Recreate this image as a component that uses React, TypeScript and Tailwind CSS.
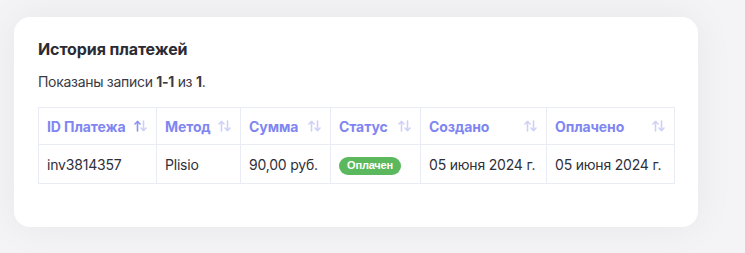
import React from "react";

const SortIcon = ({ active = false }: { active?: boolean }) => (
  <svg width="13" height="12" viewBox="0 0 13 12" className="shrink-0">
    <g fill="none" strokeWidth="1.6" strokeLinecap="round" strokeLinejoin="round">
      <g stroke={active ? "#8d92f2" : "#cdd0f7"}>
        <path d="M3.5 11V1.5" />
        <path d="M1 4L3.5 1.5L6 4" />
      </g>
      <g stroke="#cdd0f7">
        <path d="M9.5 1V10.5" />
        <path d="M7 8L9.5 10.5L12 8" />
      </g>
    </g>
  </svg>
);

const cols = [
  { label: "ID Платежа", w: 118, active: true },
  { label: "Метод", w: 84 },
  { label: "Сумма", w: 90 },
  { label: "Статус", w: 90 },
  { label: "Создано", w: 126 },
  { label: "Оплачено", w: 128 },
];

export default function App() {
  return (
    <div
      className="w-[745px] h-[253px] bg-[#f4f4f6] pt-[17px] pl-[14px] overflow-hidden"
      style={{ fontFamily: "Inter, 'Noto Sans', sans-serif" }}
    >
      <div className="w-[684px] h-[210px] bg-white rounded-[16px] shadow-[0_0_40px_rgba(20,20,40,0.06)] px-[24px] pt-[22px]">
        <h2 className="text-[16px] font-bold text-[#2b2b33] leading-[20px] tracking-[-0.1px]">
          История платежей
        </h2>
        <p className="mt-[14px] text-[14px] text-[#3a3a44] leading-[18px] tracking-[-0.3px]">
          Показаны записи <span className="font-bold">1-1</span> из <span className="font-bold">1</span>.
        </p>
        <table className="mt-[16px] table-fixed border-collapse w-[637px]">
          <colgroup>
            {cols.map((c) => (
              <col key={c.label} style={{ width: c.w }} />
            ))}
          </colgroup>
          <thead>
            <tr className="h-[37px]">
              {cols.map((c) => (
                <th key={c.label} className="border border-[#e9ebf5] pl-[8px] pr-[9px] text-left align-middle">
                  <div className="flex items-center justify-between">
                    <span className="text-[14px] font-bold text-[#7f86f2] tracking-[-0.1px]">{c.label}</span>
                    <SortIcon active={c.active} />
                  </div>
                </th>
              ))}
            </tr>
          </thead>
          <tbody>
            <tr className="h-[39px] text-[14px] text-[#2f2f3a] tracking-[-0.2px]">
              <td className="border border-[#e9ebf5] px-[8px]">inv3814357</td>
              <td className="border border-[#e9ebf5] px-[8px]">Plisio</td>
              <td className="border border-[#e9ebf5] px-[8px] whitespace-nowrap">90,00 руб.</td>
              <td className="border border-[#e9ebf5] px-[8px]">
                <span
                  className="inline-flex items-center justify-center h-[18px] w-[62px] rounded-full bg-[#5cb85c] text-white text-[11px] font-bold"
                  style={{ fontFamily: "'Liberation Sans', Arial, sans-serif" }}
                >
                  Оплачен
                </span>
              </td>
              <td className="border border-[#e9ebf5] px-[8px] whitespace-nowrap">05 июня 2024 г.</td>
              <td className="border border-[#e9ebf5] px-[8px] whitespace-nowrap">05 июня 2024 г.</td>
            </tr>
          </tbody>
        </table>
      </div>
    </div>
  );
}
